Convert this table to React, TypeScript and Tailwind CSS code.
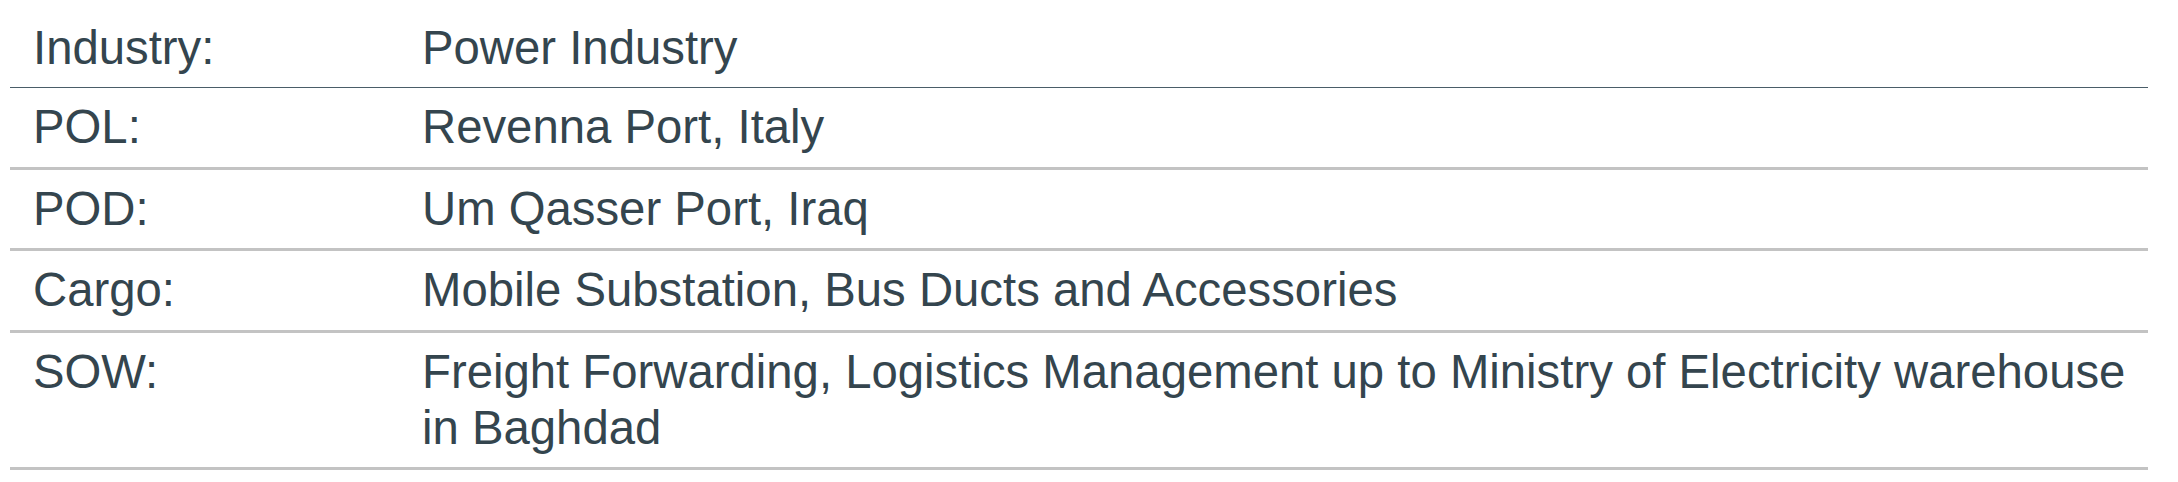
import React from "react";

const rows: { label: string; value: string; first?: boolean }[] = [
  { label: "Industry:", value: "Power Industry", first: true },
  { label: "POL:", value: "Revenna Port, Italy" },
  { label: "POD:", value: "Um Qasser Port, Iraq" },
  { label: "Cargo:", value: "Mobile Substation, Bus Ducts and Accessories" },
  {
    label: "SOW:",
    value:
      "Freight Forwarding, Logistics Management up to Ministry of Electricity warehouse in Baghdad",
  },
];

export default function App() {
  return (
    <div
      className="w-[2178px] h-[482px] bg-white pt-[9px] pl-[10px] pr-[30px] text-[#34454e] text-[47.3px] leading-[56.4px]"
      style={{ fontFamily: '"Liberation Sans", Arial, Helvetica, sans-serif' }}
    >
      <div className="flex flex-col">
        {rows.map((r) => (
          <div
            key={r.label}
            className={
              r.first
                ? "flex py-[11px] border-b border-[#4a5d68]"
                : "flex py-[11px] border-b-[3px] border-[#c3c3c3]"
            }
          >
            <div className="w-[412px] shrink-0 pl-[23px]">{r.label}</div>
            <div className="flex-1 pr-[4px]">{r.value}</div>
          </div>
        ))}
      </div>
    </div>
  );
}
